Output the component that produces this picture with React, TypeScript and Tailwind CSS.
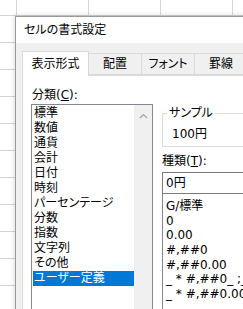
import React from 'react';

const categories = [
  '標準',
  '数値',
  '通貨',
  '会計',
  '日付',
  '時刻',
  'パーセンテージ',
  '分数',
  '指数',
  '文字列',
  'その他',
  'ユーザー定義',
];

const formats = ['G/標準', '0', '0.00', '#,##0', '#,##0.00', '_ * #,##0_ ;_ * -#,##0_ ;', '_ * #,##0.00_ ;'];

const tabs = ['表示形式', '配置', 'フォント', '罫線'];

// 背景のワークシート
const Sheet = () => {
  const cols = [17, 72, 72, 72, 72];
  const rows = [16, 27, 27, 27, 27, 27, 27, 27, 27, 27, 27, 27];
  return (
    <div className="absolute inset-0 flex flex-col">
      {rows.map((h, r) => (
        <div key={r} className="flex shrink-0" style={{ height: h }}>
          {cols.map((w, c) => (
            <div key={c} className="shrink-0 border-r border-b border-[#d4d4d4]" style={{ width: w }} />
          ))}
        </div>
      ))}
    </div>
  );
};

const ChevronUp = () => (
  <svg width="9" height="6" viewBox="0 0 9 6" fill="none">
    <path d="M1 5 L4.5 1.5 L8 5" stroke="#a3a3a3" strokeWidth="1.2" />
  </svg>
);

const App: React.FC = () => {
  return (
    <div
      className="relative w-[243px] h-[309px] overflow-hidden bg-white text-[12px] text-black [font-feature-settings:'palt']"
      style={{ fontFamily: '"DejaVu Sans", "Noto Sans CJK JP", sans-serif' }}
    >
      <Sheet />

      {/* ダイアログ */}
      <div className="absolute left-[15px] top-[16px] w-[260px] h-[320px] border border-[#9a9a9a] bg-[#f0f0f0] shadow-[0_0_5px_rgba(0,0,0,0.2)] flex flex-col">
        <div className="h-[30px] bg-white flex items-center pl-[8px] leading-[14px]">セルの書式設定</div>

        <div className="flex flex-col pl-[6px] pt-[8px]">
          {/* タブ */}
          <div className="flex items-end h-[24px]">
            {tabs.map((t, i) =>
              i === 0 ? (
                <div
                  key={t}
                  className="w-[67px] shrink-0 h-[25px] -mb-px bg-white border border-b-0 border-[#d9d9d9] flex items-center justify-center leading-[14px] relative z-10"
                >
                  {t}
                </div>
              ) : (
                <div
                  key={t}
                  className="w-[53px] shrink-0 h-[22px] border border-l-0 border-[#d9d9d9] flex items-center justify-center leading-[14px]"
                >
                  {t}
                </div>
              )
            )}
          </div>

          {/* タブの中身 */}
          <div className="h-[260px] bg-white border border-[#d9d9d9] flex gap-[9px] pl-[8px] pt-[12px]">
            <div className="w-[122px] shrink-0 flex flex-col">
              <div className="leading-[14px] pl-[1px]">
                分類(<span className="underline">C</span>):
              </div>
              <div className="mt-[2px] h-[220px] border border-[#828790] flex">
                <div className="flex-1 flex flex-col pt-[1px] pl-[1px]">
                  {categories.map((c, i) => (
                    <div
                      key={c}
                      className={
                        i === categories.length - 1
                          ? 'h-[15px] leading-[15px] pl-[1px] bg-[#0078d7] text-white whitespace-nowrap'
                          : 'h-[15px] leading-[15px] pl-[1px] whitespace-nowrap'
                      }
                    >
                      {c}
                    </div>
                  ))}
                </div>
                <div className="w-[18px] shrink-0 bg-[#f0f0f0] flex flex-col items-center pt-[8px]">
                  <ChevronUp />
                </div>
              </div>
            </div>

            <div className="w-[120px] shrink-0 flex flex-col pt-[18px]">
              <fieldset className="border border-[#dcdcdc] pb-[5px]">
                <legend className="ml-[4px] px-[2px] leading-[14px]">サンプル</legend>
                <div className="pt-[7px] pl-[9px] leading-[14px]">100円</div>
              </fieldset>
              <div className="mt-[7px] leading-[14px]">
                種類(<span className="underline">T</span>):
              </div>
              <div className="mt-[4px] h-[22px] border border-[#7a7a7a] flex items-center pl-[3px] leading-[14px]">0円</div>
              <div className="h-[120px] border border-t-0 border-[#828790] pt-[5px] pl-[3px] overflow-hidden">
                {formats.map((f) => (
                  <div key={f} className="h-[14.67px] leading-[14.67px] whitespace-nowrap">
                    {f}
                  </div>
                ))}
              </div>
            </div>
          </div>
        </div>
      </div>
    </div>
  );
};

export default App;
